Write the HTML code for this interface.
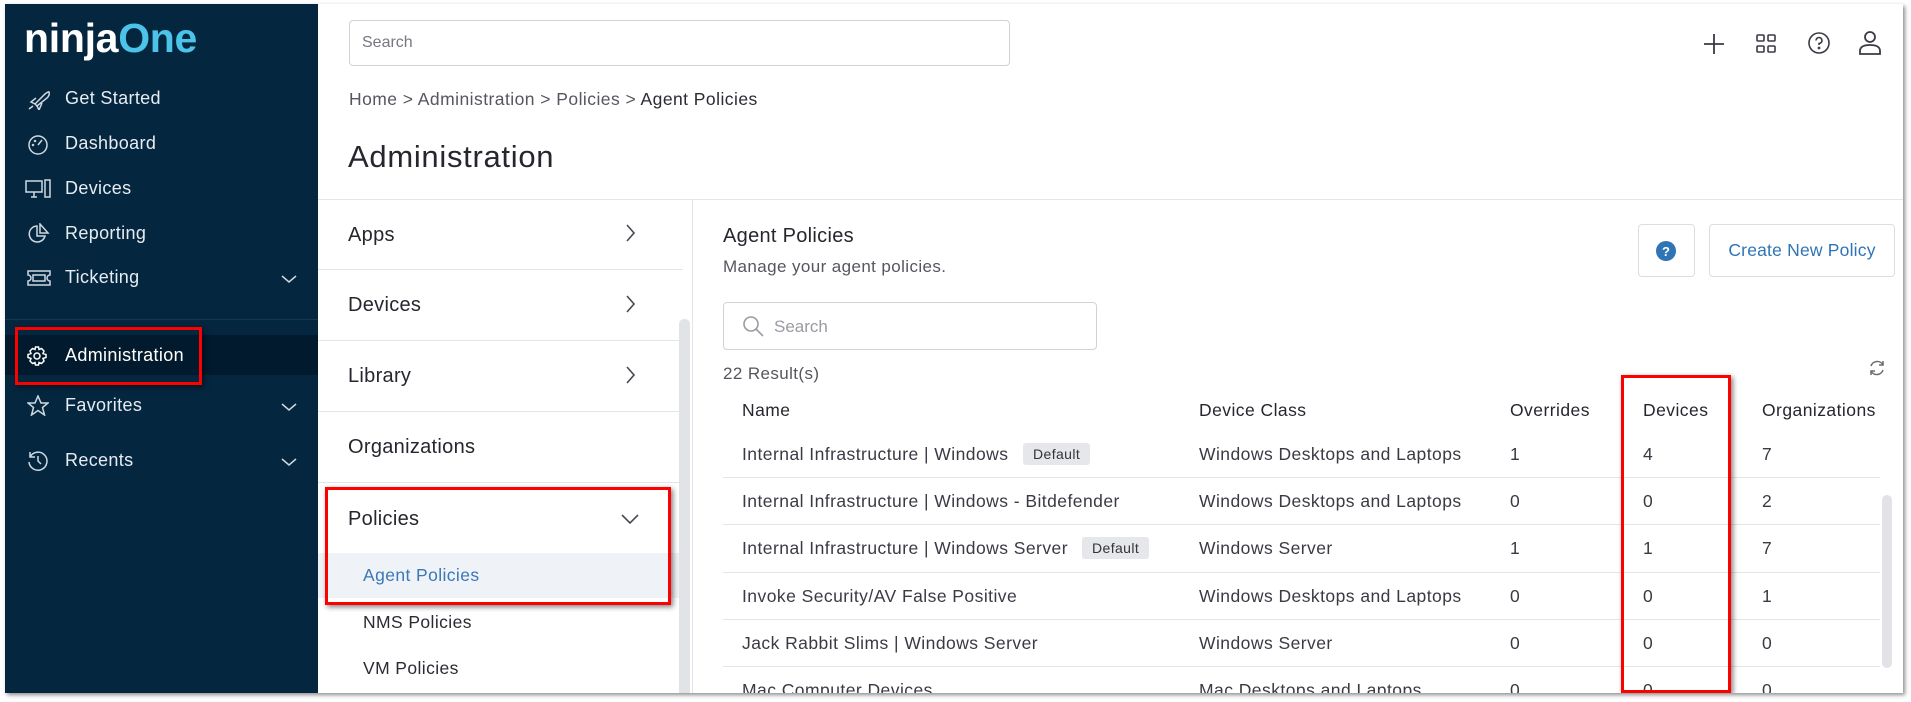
<!DOCTYPE html>
<html><head><meta charset="utf-8"><style>
*{margin:0;padding:0;box-sizing:border-box}
body{width:1911px;height:702px;background:#fff;font-family:"Liberation Sans",sans-serif;color:#2b2b33;position:relative;overflow:hidden}
.frame{position:absolute;left:5px;top:4px;width:1898px;height:689px;background:#fff;box-shadow:2px 2px 4px rgba(0,0,0,.45);overflow:hidden}
.a{position:absolute;white-space:nowrap}
.side{position:absolute;left:0;top:0;width:313px;height:689px;background:#04263f}
.nav{position:absolute;left:60px;color:#e6ecf1;font-size:18px;letter-spacing:.35px}
.ic{position:absolute;left:22px}
.chev{position:absolute;left:276px}
.red{position:absolute;border:3px solid #f00;box-shadow:2px 2px 5px rgba(0,0,0,.5)}
.hl{position:absolute;height:1px;background:#e3e5e8}
.lp{position:absolute;left:343px;font-size:20px;color:#26262e;letter-spacing:.3px}
.td{position:absolute;font-size:17.5px;color:#3a3a44;letter-spacing:.45px}
.badge{position:absolute;background:#e6e7ea;font-size:14px;color:#33333a;padding:3px 10px;border-radius:3px;letter-spacing:.4px}
</style></head><body>
<div class="frame">
<div class="side">
 <div class="a" style="left:19px;top:11px;font-size:41px;font-weight:bold;letter-spacing:-.3px;color:#fff">ninja<span style="color:#4cc4ea">One</span></div>
 <svg class="ic" style="top:86px" width="24" height="20" viewBox="0 0 24 20" fill="none" stroke="#cfd8e0" stroke-width="1.5"><path d="M8 14 L18 4 Q22 1 22 2 Q23 5 20 8 L10 16 Z M8 14 L4 12 L9 8 M10 16 L12 20 L15 13 M6 16 L2 19"/></svg>
 <div class="nav" style="top:84px">Get Started</div>
 <svg class="ic" style="top:130px" width="22" height="22" viewBox="0 0 22 22" fill="none" stroke="#cfd8e0" stroke-width="1.5"><circle cx="11" cy="11" r="9"/><path d="M11 11 L15 6"/><circle cx="6" cy="11" r=".5"/><circle cx="8" cy="7" r=".5"/></svg>
 <div class="nav" style="top:129px">Dashboard</div>
 <svg class="ic" style="top:175px;left:20px" width="26" height="20" viewBox="0 0 26 20" fill="none" stroke="#cfd8e0" stroke-width="1.5"><rect x="1" y="2" width="16" height="11"/><path d="M6 18 H12 M9 13 V18"/><rect x="20" y="1" width="5" height="17"/></svg>
 <div class="nav" style="top:174px">Devices</div>
 <svg class="ic" style="top:219px" width="24" height="22" viewBox="0 0 24 22" fill="none" stroke="#cfd8e0" stroke-width="1.5"><path d="M10 3 A8 8 0 1 0 18 13 L10 13 Z M13 1 L21 10 L13 10 Z"/></svg>
 <div class="nav" style="top:219px">Reporting</div>
 <svg class="ic" style="top:266px" width="24" height="16" viewBox="0 0 24 16" fill="none" stroke="#cfd8e0" stroke-width="1.5"><path d="M1 1 H23 V5 A3 3 0 0 0 23 11 V15 H1 V11 A3 3 0 0 0 1 5 Z"/><rect x="6" y="5" width="12" height="6"/></svg>
 <div class="nav" style="top:263px">Ticketing</div>
 <svg class="chev" style="top:270px" width="16" height="10" viewBox="0 0 16 10" fill="none" stroke="#cfd8e0" stroke-width="1.5"><path d="M1 2 L8 8 L15 2"/></svg>
 <div style="position:absolute;left:0;top:315px;width:313px;height:1px;background:#17374f"></div>
 <div style="position:absolute;left:0;top:331px;width:313px;height:40px;background:#021a2d"></div>
 <svg class="ic" style="top:342px" width="20" height="20" viewBox="0 0 20 20" fill="none" stroke="#fff" stroke-width="1.5"><circle cx="10" cy="10" r="3"/><path d="M8.5 1 H11.5 L12 3.5 L14.5 2.5 L17 5 L16 7.5 L19 8.5 V11.5 L16 12.5 L17 15 L14.5 17.5 L12 16.5 L11.5 19 H8.5 L8 16.5 L5.5 17.5 L3 15 L4 12.5 L1 11.5 V8.5 L4 7.5 L3 5 L5.5 2.5 L8 3.5 Z"/></svg>
 <div class="nav" style="top:341px;color:#fff">Administration</div>
 <div class="red" style="left:10px;top:323px;width:187px;height:58px"></div>
 <svg class="ic" style="top:391px" width="22" height="21" viewBox="0 0 22 21" fill="none" stroke="#cfd8e0" stroke-width="1.5"><path d="M11 1 L14 8 L21 8 L15.5 12.5 L17.5 20 L11 15.5 L4.5 20 L6.5 12.5 L1 8 L8 8 Z"/></svg>
 <div class="nav" style="top:391px">Favorites</div>
 <svg class="chev" style="top:398px" width="16" height="10" viewBox="0 0 16 10" fill="none" stroke="#cfd8e0" stroke-width="1.5"><path d="M1 2 L8 8 L15 2"/></svg>
 <svg class="ic" style="top:446px" width="22" height="22" viewBox="0 0 22 22" fill="none" stroke="#cfd8e0" stroke-width="1.5"><path d="M3 7 A9 9 0 1 1 2 12 M3 2 V7 H8 M11 6 V11 L14 14"/></svg>
 <div class="nav" style="top:446px">Recents</div>
 <svg class="chev" style="top:453px" width="16" height="10" viewBox="0 0 16 10" fill="none" stroke="#cfd8e0" stroke-width="1.5"><path d="M1 2 L8 8 L15 2"/></svg>
</div>

<div class="a" style="left:344px;top:16px;width:661px;height:46px;border:1px solid #cfd2d6;border-radius:4px"></div>
<div class="a" style="left:357px;top:30px;font-size:16px;color:#767780">Search</div>
<svg class="a" style="left:1698px;top:29px" width="22" height="22" viewBox="0 0 22 22" stroke="#3a3a44" stroke-width="1.8"><path d="M11 1 V21 M1 11 H21"/></svg>
<svg class="a" style="left:1751px;top:29px" width="20" height="22" viewBox="0 0 20 22" fill="none" stroke="#3a3a44" stroke-width="1.6"><rect x="1" y="2" width="7" height="6" rx="1"/><rect x="12" y="2" width="7" height="6" rx="1"/><rect x="1" y="13" width="7" height="6" rx="1"/><rect x="12" y="13" width="7" height="6" rx="1"/></svg>
<svg class="a" style="left:1802px;top:27px" width="24" height="24" viewBox="0 0 24 24" fill="none" stroke="#3a3a44" stroke-width="1.6"><circle cx="12" cy="12" r="10"/><path d="M9 9.5 A3 3 0 1 1 12 12.5 V14"/><circle cx="12" cy="17" r=".6"/></svg>
<svg class="a" style="left:1853px;top:26px" width="24" height="26" viewBox="0 0 24 26" fill="none" stroke="#3a3a44" stroke-width="1.8"><circle cx="12" cy="7" r="5"/><path d="M2 24 V21 Q2 15 12 15 Q22 15 22 21 V24 Z"/></svg>
<div class="a" style="left:344px;top:85px;font-size:17.5px;color:#55565e;letter-spacing:.45px">Home &gt; Administration &gt; Policies &gt; <span style="color:#2b2b33">Agent Policies</span></div>
<div class="a" style="left:343px;top:135px;font-size:31px;color:#26262e;letter-spacing:.7px">Administration</div>
<div class="hl" style="left:313px;top:195px;width:1585px"></div>

<div class="lp" style="top:220px">Apps</div>
<div class="lp" style="top:290px">Devices</div>
<div class="lp" style="top:361px">Library</div>
<div class="lp" style="top:432px">Organizations</div>
<div class="lp" style="top:504px">Policies</div>
<svg class="a" style="left:620px;top:220px" width="10" height="18" viewBox="0 0 10 18" fill="none" stroke="#4a4a52" stroke-width="1.6"><path d="M2 1 L9 9 L2 17"/></svg>
<svg class="a" style="left:620px;top:291px" width="10" height="18" viewBox="0 0 10 18" fill="none" stroke="#4a4a52" stroke-width="1.6"><path d="M2 1 L9 9 L2 17"/></svg>
<svg class="a" style="left:620px;top:362px" width="10" height="18" viewBox="0 0 10 18" fill="none" stroke="#4a4a52" stroke-width="1.6"><path d="M2 1 L9 9 L2 17"/></svg>
<svg class="a" style="left:616px;top:510px" width="18" height="10" viewBox="0 0 18 10" fill="none" stroke="#4a4a52" stroke-width="1.6"><path d="M1 1 L9 9 L17 1"/></svg>
<div class="hl" style="left:313px;top:265px;width:365px"></div>
<div class="hl" style="left:313px;top:336px;width:365px"></div>
<div class="hl" style="left:313px;top:407px;width:365px"></div>
<div class="hl" style="left:313px;top:478px;width:365px"></div>
<div class="a" style="left:313px;top:549px;width:361px;height:45px;background:#eff2f6"></div>
<div class="a" style="left:358px;top:561px;font-size:17.5px;color:#3a78b8;letter-spacing:.4px">Agent Policies</div>
<div class="a" style="left:358px;top:608px;font-size:17.5px;color:#2b2b33;letter-spacing:.4px">NMS Policies</div>
<div class="a" style="left:358px;top:654px;font-size:17.5px;color:#2b2b33;letter-spacing:.4px">VM Policies</div>
<div class="red" style="left:320px;top:483px;width:346px;height:118px"></div>
<div class="a" style="left:674px;top:315px;width:11px;height:380px;background:#e2e3e6;border-radius:5px"></div>
<div class="a" style="left:687px;top:195px;width:1px;height:500px;background:#e3e5e8"></div>

<div class="a" style="left:718px;top:221px;font-size:20px;color:#26262e;letter-spacing:.3px">Agent Policies</div>
<div class="a" style="left:718px;top:253px;font-size:17px;color:#55565e;letter-spacing:.4px">Manage your agent policies.</div>
<div class="a" style="left:1633px;top:220px;width:57px;height:53px;border:1px solid #dcdde0;border-radius:4px"></div>
<svg class="a" style="left:1651px;top:237px" width="20" height="20" viewBox="0 0 20 20"><circle cx="10" cy="10" r="10" fill="#2f74b5"/><text x="10" y="15" text-anchor="middle" font-family="Liberation Sans" font-weight="bold" font-size="13" fill="#fff">?</text></svg>
<div class="a" style="left:1704px;top:220px;width:186px;height:53px;border:1px solid #dcdde0;border-radius:4px;font-size:17.5px;color:#2f74b5;text-align:center;line-height:51px;letter-spacing:.2px">Create New Policy</div>
<div class="a" style="left:718px;top:298px;width:374px;height:48px;border:1px solid #cfd2d6;border-radius:4px"></div>
<svg class="a" style="left:737px;top:311px" width="22" height="22" viewBox="0 0 22 22" fill="none" stroke="#9a9ba2" stroke-width="1.6"><circle cx="9" cy="9" r="7"/><path d="M14 14 L21 21"/></svg>
<div class="a" style="left:769px;top:313px;font-size:17px;color:#9a9ba2">Search</div>
<div class="a" style="left:718px;top:360px;font-size:17px;color:#55565e;letter-spacing:.4px">22 Result(s)</div>
<svg class="a" style="left:1863px;top:355px" width="18" height="18" viewBox="0 0 18 18" fill="none" stroke="#6a6b72" stroke-width="1.5"><path d="M3 7 A6.5 6.5 0 0 1 15 6 M15 2 V6 H11 M15 11 A6.5 6.5 0 0 1 3 12 M3 16 V12 H7"/></svg>

<div class="td" style="left:737px;top:396px;color:#26262e">Name</div>
<div class="td" style="left:1194px;top:396px;color:#26262e">Device Class</div>
<div class="td" style="left:1505px;top:396px;color:#26262e">Overrides</div>
<div class="td" style="left:1638px;top:396px;color:#26262e">Devices</div>
<div class="td" style="left:1757px;top:396px;color:#26262e">Organizations</div>

<div class="td" style="left:737px;top:440px">Internal Infrastructure | Windows</div>
<div class="badge" style="left:1018px;top:439px">Default</div>
<div class="td" style="left:1194px;top:440px">Windows Desktops and Laptops</div>
<div class="td" style="left:1505px;top:440px">1</div><div class="td" style="left:1638px;top:440px">4</div><div class="td" style="left:1757px;top:440px">7</div>
<div class="hl" style="left:718px;top:473px;width:1157px"></div>

<div class="td" style="left:737px;top:487px">Internal Infrastructure | Windows - Bitdefender</div>
<div class="td" style="left:1194px;top:487px">Windows Desktops and Laptops</div>
<div class="td" style="left:1505px;top:487px">0</div><div class="td" style="left:1638px;top:487px">0</div><div class="td" style="left:1757px;top:487px">2</div>
<div class="hl" style="left:718px;top:520px;width:1157px"></div>

<div class="td" style="left:737px;top:534px">Internal Infrastructure | Windows Server</div>
<div class="badge" style="left:1077px;top:533px">Default</div>
<div class="td" style="left:1194px;top:534px">Windows Server</div>
<div class="td" style="left:1505px;top:534px">1</div><div class="td" style="left:1638px;top:534px">1</div><div class="td" style="left:1757px;top:534px">7</div>
<div class="hl" style="left:718px;top:568px;width:1157px"></div>

<div class="td" style="left:737px;top:582px">Invoke Security/AV False Positive</div>
<div class="td" style="left:1194px;top:582px">Windows Desktops and Laptops</div>
<div class="td" style="left:1505px;top:582px">0</div><div class="td" style="left:1638px;top:582px">0</div><div class="td" style="left:1757px;top:582px">1</div>
<div class="hl" style="left:718px;top:615px;width:1157px"></div>

<div class="td" style="left:737px;top:629px">Jack Rabbit Slims | Windows Server</div>
<div class="td" style="left:1194px;top:629px">Windows Server</div>
<div class="td" style="left:1505px;top:629px">0</div><div class="td" style="left:1638px;top:629px">0</div><div class="td" style="left:1757px;top:629px">0</div>
<div class="hl" style="left:718px;top:662px;width:1157px"></div>

<div class="td" style="left:737px;top:676px">Mac Computer Devices</div>
<div class="td" style="left:1194px;top:676px">Mac Desktops and Laptops</div>
<div class="td" style="left:1505px;top:676px">0</div><div class="td" style="left:1638px;top:676px">0</div><div class="td" style="left:1757px;top:676px">0</div>

<div class="a" style="left:1877px;top:491px;width:10px;height:173px;background:#e2e3e6;border-radius:5px"></div>
<div class="red" style="left:1616px;top:371px;width:110px;height:318px"></div>
</div>
</body></html>
